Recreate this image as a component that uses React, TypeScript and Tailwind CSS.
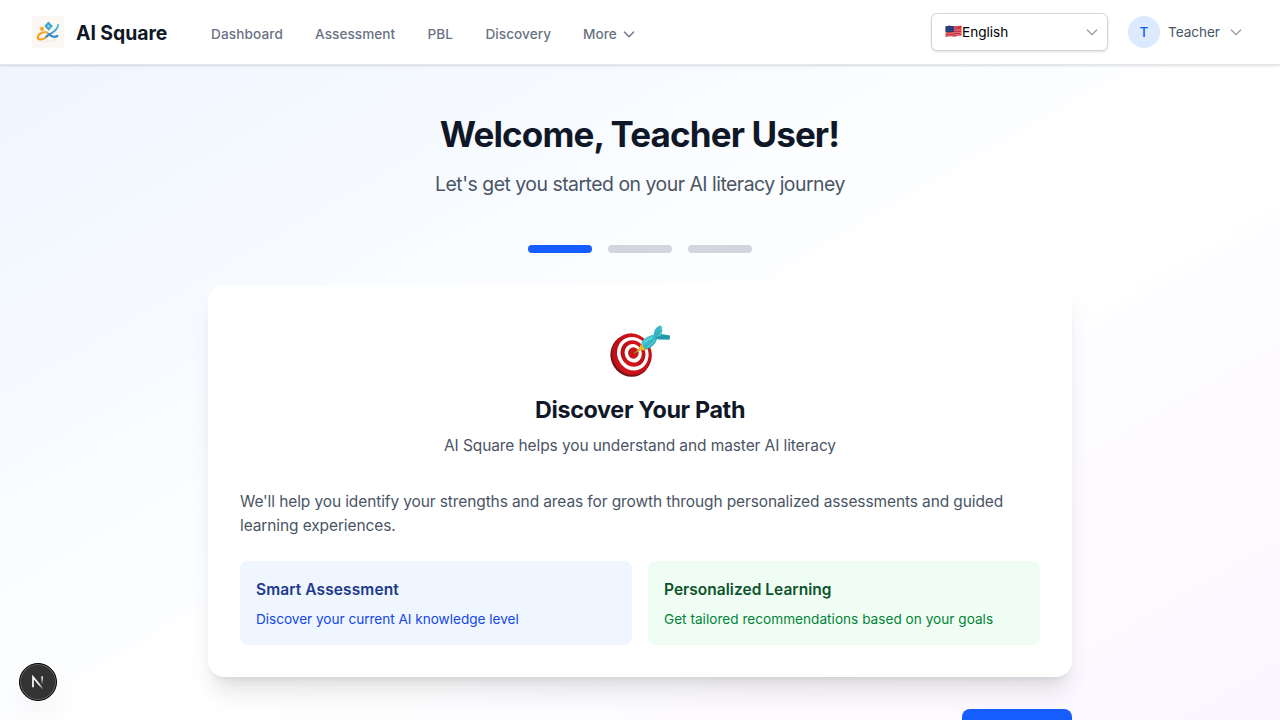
import { ReactNode, useId } from "react";

function Chevron({ className }: { className: string }) {
  return (
    <svg viewBox="0 0 24 24" fill="none" stroke="currentColor" strokeWidth="2" strokeLinecap="round" strokeLinejoin="round" className={className}>
      <path d="M19 9l-7 7-7-7" />
    </svg>
  );
}

function Logo() {
  return (
    <svg viewBox="0 0 32 32" className="h-8 w-8 shrink-0">
      <defs>
        <linearGradient id="orange" gradientUnits="userSpaceOnUse" x1="5" x2="21" y1="20" y2="17">
          <stop offset="0" stopColor="#f99a16" />
          <stop offset=".55" stopColor="#f4b040" />
          <stop offset="1" stopColor="#4aa8d8" />
        </linearGradient>
        <linearGradient id="blue" x1="1" x2="0" y1="0" y2="1">
          <stop offset="0" stopColor="#53c1df" />
          <stop offset="1" stopColor="#2d7fc9" />
        </linearGradient>
      </defs>
      <rect width="32" height="32" fill="#fbf7f2" />
      <path d="M9.5 25.4C13 25.8 21 25.4 24.5 23.6" stroke="#f1ebe4" strokeWidth="1" fill="none" />
      <path d="M12 16.4C8.5 16.6 5.6 19.2 5.8 21.4C6.1 24.6 11.2 23.6 14 21.2C16 19.4 17 17.6 15.2 16.6C13.5 15.8 12 16 10.4 16.8" fill="none" stroke="url(#orange)" strokeWidth="2.1" strokeLinecap="round" />
      <path d="M14.2 20.8C18 17.2 25.6 15.6 26.2 8.8" fill="none" stroke="url(#blue)" strokeWidth="1.9" strokeLinecap="round" />
      <path d="M17 18.2C19 20.2 21.5 22.4 25.4 20" fill="none" stroke="#318aca" strokeWidth="2.2" strokeLinecap="round" />
      <circle cx="10" cy="12.8" r="2.1" fill="#f9a72a" />
      <path d="M16.4 5.6L20.8 10.1L16.6 14.8L12.4 10Z" fill="#3ba7cb" />
      <path d="M16.4 8.4L18.1 10.2L16.5 12L14.9 10.1Z" fill="#8fd5e2" />
    </svg>
  );
}

function Flag() {
  return (
    <svg viewBox="0 0 17 13" className="-mt-0.5 h-[13px] w-[17px] shrink-0">
      <defs>
        <clipPath id="cloth">
          <path d="M.6 1.5C4 .1 6 .9 8.5 1.2C11 1.6 14 .2 16.5 .6V11C14 10.4 11.5 12 8.5 11.5C6 11 3.7 10.9 .6 12Z" />
        </clipPath>
      </defs>
      <g clipPath="url(#cloth)">
        <rect width="17" height="13" fill="#e9b9bd" />
        <path d="M0 1.3Q4 .2 8.5 1.4T17 1M0 3Q4 1.9 8.5 3T17 2.6M0 4.7Q4 3.6 8.5 4.7T17 4.3M0 6.4Q4 5.3 8.5 6.4T17 6M0 8.1Q4 7 8.5 8.1T17 7.7M0 9.8Q4 8.7 8.5 9.8T17 9.4M0 11.4Q4 10.3 8.5 11.4T17 11" fill="none" stroke="#cb2837" strokeWidth="1.2" />
        <path d="M0 0H8.8V7H0Z" fill="#203a78" />
        <path d="M2 2.5H8M2 4H8M2 5.5H8" stroke="#5f75aa" strokeWidth=".5" strokeDasharray=".6 .9" />
      </g>
    </svg>
  );
}

function Target() {
  const id = useId();
  return (
    <svg viewBox="0 0 60 60" className="h-[60px] w-[60px]">
      <defs>
        <linearGradient id={id + "r"} x1="0" y1="0" x2="1" y2="1">
          <stop stopColor="#b20d14" />
          <stop offset=".5" stopColor="#d5151b" />
          <stop offset="1" stopColor="#b80c14" />
        </linearGradient>
        <linearGradient id={id + "t"} x1="0" y1="0" x2="1" y2="1">
          <stop stopColor="#67dce2" />
          <stop offset=".5" stopColor="#32b9c7" />
          <stop offset="1" stopColor="#158d9f" />
        </linearGradient>
      </defs>
      <ellipse cx="20.6" cy="38.7" rx="20" ry="21.4" transform="rotate(-24 20.6 38.7)" fill="#77151a" />
      <ellipse cx="22" cy="37.1" rx="19.6" ry="21" transform="rotate(-24 22 37.1)" fill={"url(#" + id + "r)"} />
      <ellipse cx="22.8" cy="36.7" rx="15.5" ry="17" transform="rotate(-24 22.8 36.7)" fill="#fff" />
      <ellipse cx="23" cy="36.5" rx="12.2" ry="13.4" transform="rotate(-24 23 36.5)" fill={"url(#" + id + "r)"} />
      <ellipse cx="23.2" cy="36.3" rx="8.5" ry="9.4" transform="rotate(-24 23.2 36.3)" fill="#fff" />
      <ellipse cx="23.4" cy="36" rx="5.3" ry="5.8" fill="#c8141b" />
      <path d="M24 36.5L34 29" stroke="#9c721b" strokeWidth="1.6" />
      <path d="M30.8 27L37 33L29.5 33.6L26 35.5L29 32Z" fill="#e7b91d" />
      <path d="M31.3 25.8C33 21.5 39 18.5 43.5 17.8L47.4 20.6C46.5 26.5 40.5 32 35.2 32.6Z" fill={"url(#" + id + "t)"} />
      <path d="M43.4 19.2L44.3 14.2Q46 10 50 8.5L51.5 9.3L51 15.5L46.5 20.5Z" fill="#39b4c3" />
      <path d="M45.6 20.8L51.5 17L60 18.4Q60 21.5 59.5 22.8L48.5 22.6Z" fill="#239daf" />
      <path d="M45 20.2L48.6 13.8L51.4 9.2Q53.8 13.5 50.6 17.8Z" fill="#45c1cd" />
      <path d="M34.5 25.6Q39 21.3 43 20.8M37 30.5Q42 27.6 45 22.6" fill="none" stroke="#77e1e4" strokeWidth="1" />
      <path d="M45.8 20.4L50 13.5M47 21.2L58 19.8" stroke="#16899a" strokeWidth=".7" />
    </svg>
  );
}

function Feature({ title, text, box, head, body }: { title: ReactNode; text: string; box: string; head: string; body: string }) {
  return (
    <div className={"h-[84px] rounded-lg px-4 pt-[17px] " + box}>
      <h3 className={"mb-[7px] whitespace-nowrap text-[15.5px] leading-6 font-semibold " + head}>{title}</h3>
      <p className={"whitespace-nowrap text-[13.6px] leading-5 " + body}>{text}</p>
    </div>
  );
}

export default function App() {
  return (
    <div className="relative h-screen overflow-hidden bg-white font-['Inter','Liberation_Sans',sans-serif]">
      <header className="relative z-10 flex h-[65px] items-center justify-between border-b border-gray-200 bg-white pr-9 pl-8 shadow-sm">
        <div className="flex items-center">
          <Logo />
          <span className="mt-0.5 ml-3 w-[91px] text-[19.4px] leading-7 font-bold tracking-[-0.05px] whitespace-nowrap text-gray-900">AI Square</span>
          <nav className="mt-[3px] ml-11 flex items-center gap-8 text-[13.6px] leading-5 font-medium tracking-[0.05px] whitespace-nowrap text-gray-500">
            <a className="w-[72px] tracking-[0.12px]">Dashboard</a>
            <a className="w-[80.5px]">Assessment</a>
            <a className="w-[26px]">PBL</a>
            <a className="w-[65.5px]">Discovery</a>
            <a className="flex items-center gap-1"><span className="w-[33.5px]">More</span><Chevron className="h-4 w-4" /></a>
          </nav>
        </div>
        <div className="flex items-center">
          <button className="mr-5 flex h-[38px] w-[177px] items-center rounded-md border border-gray-300 bg-white pr-[7px] pl-[13px] text-[13.6px] leading-5 text-black shadow-sm">
            <Flag />
            <span>English</span>
            <Chevron className="ml-auto h-4 w-4 text-gray-400" />
          </button>
          <span className="flex h-8 w-8 items-center justify-center rounded-full bg-blue-100 text-[13.6px] font-medium text-blue-600">T</span>
          <span className="mr-2 ml-2 w-[52px] text-[13.6px] leading-5 tracking-[-0.05px] whitespace-nowrap text-gray-600">Teacher</span>
          <Chevron className="h-4 w-4 text-gray-400" />
        </div>
      </header>

      <main className="min-h-[744px] bg-linear-to-br from-blue-50 via-white to-purple-50 py-12">
        <div className="mx-auto w-[864px]">
          <div className="mb-[47px] pt-px text-center">
            <h1 className="mb-4 pr-px text-[35px] leading-10 font-bold tracking-[-0.88px] text-gray-900">Welcome, Teacher User!</h1>
            <p className="text-[19.4px] leading-7 tracking-[-0.49px] text-gray-600">Let's get you started on your AI literacy journey</p>
          </div>
          <div className="mb-8 flex justify-center gap-4">
            <span className="h-2 w-16 rounded-full bg-blue-600" />
            <span className="h-2 w-16 rounded-full bg-gray-300" />
            <span className="h-2 w-16 rounded-full bg-gray-300" />
          </div>
          <section className="mb-8 rounded-2xl bg-white p-8 shadow-xl">
            <div className="mb-8 text-center">
              <div className="mb-[17px] flex justify-center"><Target /></div>
              <h2 className="mb-2 text-[23.3px] leading-8 font-bold tracking-[-0.32px] text-gray-900">Discover Your Path</h2>
              <p className="text-[15.5px] leading-6 tracking-[-0.1px] text-gray-600">AI Square helps you understand and master AI literacy</p>
            </div>
            <p className="mb-[23px] text-[15.5px] leading-6 tracking-[-0.11px] text-gray-600">We'll help you identify your strengths and areas for growth through personalized assessments and guided<br />learning experiences.</p>
            <div className="grid grid-cols-2 gap-4">
              <Feature title="Smart Assessment" text="Discover your current AI knowledge level" box="bg-blue-50" head="text-blue-900 tracking-[0.1px]" body="text-blue-700 tracking-[-0.02px]" />
              <Feature title="Personalized Learning" text="Get tailored recommendations based on your goals" box="bg-green-50" head="text-green-900 tracking-[0.03px]" body="text-green-700 tracking-[0.02px]" />
            </div>
          </section>
          <div className="flex justify-end">
            <button aria-label="Next" className="h-12 w-[109.6px] rounded-lg bg-blue-600" />
          </div>
        </div>
      </main>

      <div className="absolute bottom-[19px] left-[19px] z-20 flex h-[38px] w-[38px] items-center justify-center rounded-full border border-black bg-[#333] shadow-[inset_0_0_0_1px_#626262,0_16px_32px_-8px_rgba(0,0,0,0.12)]">
        <svg viewBox="0 0 14 14" className="h-[14px] w-[14px]" fill="none">
          <defs>
            <linearGradient id="fade" x1="0" y1="0" x2="0" y2="1"><stop stopColor="#fff" /><stop offset="1" stopColor="#fff" stopOpacity="0" /></linearGradient>
            <linearGradient id="diagonal" x1="0" y1="0" x2="1" y2="1"><stop offset=".55" stopColor="#fff" /><stop offset="1" stopColor="#fff" stopOpacity=".1" /></linearGradient>
          </defs>
          <path d="M2 12.2V2L12 14" stroke="url(#diagonal)" strokeWidth="1.7" />
          <rect x="10.3" y="1.4" width="1.7" height="8" fill="url(#fade)" />
        </svg>
      </div>
    </div>
  );
}
